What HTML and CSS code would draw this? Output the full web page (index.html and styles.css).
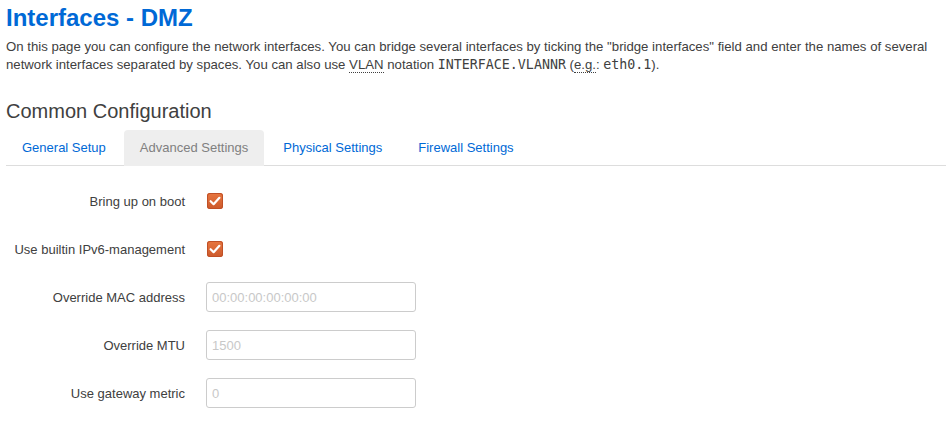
FILE: index.html
```html
<!DOCTYPE html>
<html>
<head>
<meta charset="utf-8">
<link rel="stylesheet" href="styles.css">
</head>
<body>
<div class="page">
  <h2 class="title">Interfaces - DMZ</h2>
  <p class="desc">On this page you can configure the network interfaces. You can bridge several interfaces by ticking the "bridge interfaces" field and enter the names of several network interfaces separated by spaces. You can also use <abbr title="Virtual Local Area Network">VLAN</abbr> notation <samp>INTERFACE.VLANNR</samp> (<abbr title="for example">e.g.</abbr>: <samp>eth0.1</samp>).</p>
  <h3 class="section">Common Configuration</h3>
  <ul class="tabs">
    <li class="tab"><a>General Setup</a></li>
    <li class="tab active"><a>Advanced Settings</a></li>
    <li class="tab"><a>Physical Settings</a></li>
    <li class="tab"><a>Firewall Settings</a></li>
  </ul>
  <div class="form">
    <div class="row">
      <label class="lbl">Bring up on boot</label>
      <div class="ctl"><span class="check"><svg viewBox="0 0 16 16" width="16" height="16"><path d="M3.6 8.2 L6.6 11.2 L12.4 4.8" fill="none" stroke="#fff" stroke-width="2.2" stroke-linecap="round" stroke-linejoin="round"/></svg></span></div>
    </div>
    <div class="row">
      <label class="lbl">Use builtin IPv6-management</label>
      <div class="ctl"><span class="check"><svg viewBox="0 0 16 16" width="16" height="16"><path d="M3.6 8.2 L6.6 11.2 L12.4 4.8" fill="none" stroke="#fff" stroke-width="2.2" stroke-linecap="round" stroke-linejoin="round"/></svg></span></div>
    </div>
    <div class="row">
      <label class="lbl">Override MAC address</label>
      <div class="ctl"><input class="inp" type="text" placeholder="00:00:00:00:00:00"></div>
    </div>
    <div class="row">
      <label class="lbl">Override MTU</label>
      <div class="ctl"><input class="inp" type="text" placeholder="1500"></div>
    </div>
    <div class="row">
      <label class="lbl">Use gateway metric</label>
      <div class="ctl"><input class="inp" type="text" placeholder="0"></div>
    </div>
  </div>
</div>
</body>
</html>
```
FILE: styles.css
```css
html, body {
  margin: 0;
  padding: 0;
  background: #fff;
}
body {
  font-family: "Liberation Sans", Arial, sans-serif;
  font-size: 13px;
  color: #404040;
}
.page {
  padding: 0 6px;
}
.title {
  margin: 0;
  padding-top: 3px;
  font-size: 24px;
  line-height: 30px;
  font-weight: bold;
  color: #0069d6;
}
.desc {
  margin: 5px 0 0 0;
  line-height: 18px;
  font-size: 13.2px;
}
abbr {
  text-decoration: none;
  border-bottom: 1px dotted #404040;
}
samp {
  font-family: "DejaVu Sans Mono", monospace;
  font-size: 13.3px;
}
.section {
  margin: 23px 0 0 0;
  font-size: 20px;
  line-height: 28px;
  font-weight: normal;
  color: #404040;
}
.tabs {
  list-style: none;
  margin: 5px 0 0 0;
  padding: 0;
  display: flex;
  border-bottom: 1px solid #ddd;
}
.tab {
  margin-right: 2px;
  margin-bottom: -1px;
}
.tab a {
  display: block;
  padding: 0 16px;
  line-height: 36px;
  color: #0069d6;
  border-radius: 4px 4px 0 0;
}
.tab:nth-child(3) a {
  padding-left: 17px;
}
.tab:nth-child(4) a {
  padding-left: 18px;
}
.tab.active a {
  background: #eee;
  color: #808080;
}
.form {
  padding-top: 11px;
}
.row {
  display: flex;
  align-items: center;
  height: 48px;
}
.lbl {
  width: 179px;
  text-align: right;
  padding-right: 21px;
  flex: none;
}
.ctl {
  display: flex;
  align-items: center;
}
.check {
  display: inline-flex;
  width: 16px;
  height: 16px;
  margin-left: 1px;
  border-radius: 3px;
  background: linear-gradient(#e8763f, #cc5a2c);
  box-shadow: inset 0 0 0 1px #c05026;
}
.inp {
  box-sizing: border-box;
  width: 210px;
  height: 30px;
  border: 1px solid #ccc;
  border-radius: 3px;
  padding: 0 5px;
  font-family: "Liberation Sans", Arial, sans-serif;
  font-size: 13px;
  color: #404040;
}
.inp::placeholder {
  color: #c8c8c8;
}
```
